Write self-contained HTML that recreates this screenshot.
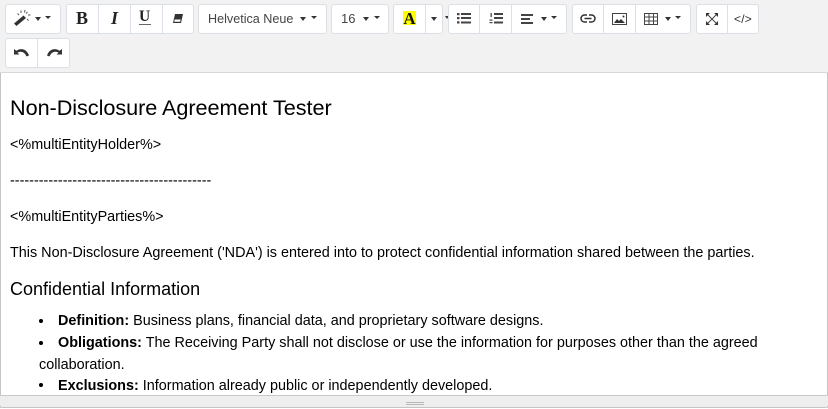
<!DOCTYPE html>
<html><head><meta charset="utf-8">
<style>
html,body{margin:0;padding:0;width:828px;height:409px;overflow:hidden;background:#fff;font-family:"Liberation Sans",sans-serif;color:#000}
.abs{position:absolute}
#tb{position:absolute;left:0;top:0;width:828px;height:72px;background:#f2f2f2;border-bottom:1px solid #d6d9dc}
.g{position:absolute;background:#fff;border:1px solid #dae0e5;border-radius:3px;box-sizing:border-box}
.d{position:absolute;top:0;bottom:0;width:1px;background:#dae0e5}
.t{position:absolute;white-space:nowrap;font-size:14.4px;line-height:18px;color:#000}
.tl{position:absolute;white-space:nowrap;font-size:12.6px;line-height:16px;color:#444}
svg{position:absolute;overflow:visible}
.car{position:absolute;width:0;height:0;border-left:3.500px solid transparent;border-right:3.500px solid transparent;border-top:4px solid #333}
.car2{position:absolute;width:0;height:0;border-left:3px solid transparent;border-right:3px solid transparent;border-top:3px solid #333}
</style></head><body>
<div id="tb">
<div class="g" style="left:5px;top:4px;width:56px;height:30px"></div>
<svg style="left:13px;top:9px" width="20" height="18" viewBox="0 0 20 18"><path d="M1 14.500L10.500 6.500l2.500 2.500-9.500 8z" fill="#333"/><path d="M8 1.500v2.500M12 1l-.5 2.500M15 6h2.500M14 10l1.500 1.500M4.500 4.500l1.500 1.500M14.500 3l-1.500 1.500" stroke="#555" stroke-width="1" fill="none"/></svg>
<div class="car" style="left:34.500px;top:17px"></div><div class="car2" style="left:45px;top:16px"></div>

<div class="g" style="left:66px;top:4px;width:128px;height:30px">
<div class="d" style="left:31px"></div><div class="d" style="left:63px"></div><div class="d" style="left:95px"></div></div>
<div class="abs" style="left:76px;top:8px;font:bold 18px/20px 'Liberation Serif',serif;color:#222">B</div>
<div class="abs" style="left:111px;top:8px;font:italic bold 18px/20px 'Liberation Serif',serif;color:#222">I</div>
<div class="abs" style="left:139px;top:7px;font:bold 15.500px/20px 'Liberation Serif',serif;color:#222">U</div>
<div class="abs" style="left:139px;top:24px;width:12px;height:1px;background:#666"></div>
<svg style="left:172px;top:13px" width="12" height="12" viewBox="0 0 12 12"><path d="M3 1h8L9 10H1z" fill="#333"/><path d="M2.700 6.500h6L8.200 8.800H2.200z" fill="#fff"/></svg>

<div class="g" style="left:198px;top:4px;width:129px;height:30px"></div>
<div class="tl" style="left:208px;top:11px">Helvetica Neue</div>
<div class="car" style="left:299.500px;top:17px"></div><div class="car2" style="left:311px;top:16px"></div>

<div class="g" style="left:331px;top:4px;width:58px;height:30px"></div>
<div class="tl" style="left:341px;top:11px;font-size:13px">16</div>
<div class="car" style="left:362.500px;top:17px"></div><div class="car2" style="left:374px;top:16px"></div>

<div class="g" style="left:393px;top:4px;width:50px;height:30px"><div class="d" style="left:31px"></div></div>
<div class="abs" style="left:403px;top:11px;width:13px;height:14px;background:#ff0;font:bold 17px/16px 'Liberation Serif',serif;text-align:center;color:#111;overflow:hidden">A</div>
<div class="car" style="left:430.500px;top:17px"></div>
<div class="car2" style="left:445px;top:16px;border-left-width:2px;border-right-width:2px"></div>

<div class="g" style="left:448px;top:4px;width:119px;height:30px">
<div class="d" style="left:30px"></div><div class="d" style="left:62px"></div></div>
<svg style="left:457px;top:12px" width="14" height="12" viewBox="0 0 14 12"><g fill="#444"><rect x="0" y="1" width="2.500" height="2.200"/><rect x="0" y="5" width="2.500" height="2.200"/><rect x="0" y="9.300" width="2.500" height="2.200"/><rect x="4" y="1" width="10" height="2"/><rect x="4" y="5" width="10" height="2"/><rect x="4" y="9.500" width="10" height="2"/></g></svg>
<svg style="left:489px;top:12px" width="14" height="12" viewBox="0 0 14 12"><g fill="#444"><rect x="5" y="1" width="9" height="2"/><rect x="5" y="5" width="9" height="2"/><rect x="5" y="9.500" width="9" height="2"/><rect x="1.500" y="1" width="1.300" height="4"/><rect x="0.500" y="7.500" width="3" height="1.200"/><rect x="0.500" y="10" width="3" height="1.200"/></g></svg>
<svg style="left:521px;top:13px" width="13" height="11" viewBox="0 0 13 11"><g fill="#444"><rect y="1" width="12" height="2"/><rect y="5" width="9" height="2"/><rect y="9" width="12" height="2"/></g></svg>
<div class="car" style="left:540.500px;top:17px"></div><div class="car2" style="left:551px;top:16px"></div>

<div class="g" style="left:572px;top:4px;width:119px;height:30px">
<div class="d" style="left:30px"></div><div class="d" style="left:62px"></div></div>
<svg style="left:581px;top:14px" width="14" height="9" viewBox="0 0 14 9"><path d="M6 1H3.500a3.500 3.500 0 0 0 0 7H6M8 1h2.500a3.500 3.500 0 0 1 0 7H8M3.500 4.500h7" fill="none" stroke="#333" stroke-width="1.500"/></svg>
<svg style="left:612px;top:13px" width="15" height="12" viewBox="0 0 15 12"><rect x=".5" y=".5" width="14" height="11" fill="none" stroke="#444"/><path d="M2 10l3-4 2 2 2-2 4 4z" fill="#333"/><circle cx="11.500" cy="3.500" r="1" fill="#333"/></svg>
<svg style="left:644px;top:13px" width="14" height="12" viewBox="0 0 14 12"><path d="M.5.500h13v11H.5zM.5 4h13M.5 8h13M5 .5v11M9.500.5v11" fill="none" stroke="#444"/></svg>
<div class="car" style="left:664.500px;top:17px"></div><div class="car2" style="left:675px;top:16px"></div>

<div class="g" style="left:696px;top:4px;width:63px;height:30px"><div class="d" style="left:30px"></div></div>
<svg style="left:706px;top:13px" width="12" height="12" viewBox="0 0 12 12"><path d="M2 2l8 8M10 2l-8 8" stroke="#444" stroke-width="1"/><path d="M0 0h4L0 4zM12 0H8l4 4zM0 12h4L0 8zM12 12H8l4-4z" fill="#333"/></svg>
<div class="abs" style="left:734px;top:11px;font-size:12px;line-height:16px;color:#333;letter-spacing:.2px">&lt;/&gt;</div>

<div class="g" style="left:5px;top:38px;width:65px;height:30px"><div class="d" style="left:31px"></div></div>
<svg style="left:14px;top:48px" width="15" height="9" viewBox="0 0 15 9"><path d="M0 1v5.500h5.500L3.500 4.700C6.500 2.800 10.500 3.500 12.500 8.500L15 7.500C12.800 1 7 -.5 2.300 2.800z" fill="#333"/></svg>
<svg style="left:47px;top:48px" width="15" height="9" viewBox="0 0 15 9"><path d="M15 1v5.500H9.500l2-1.800C8.500 2.800 4.500 3.500 2.500 8.500L0 7.500C2.200 1 8-.5 12.700 2.800z" fill="#333"/></svg>
</div>

<div class="abs" style="left:0;top:73px;width:1px;height:335px;background:#c4c4c4"></div>
<div class="abs" style="left:827px;top:73px;width:1px;height:335px;background:#c4c4c4"></div>

<div class="t" style="left:10px;top:95px;font-size:21.650px;line-height:26px;letter-spacing:-.05px">Non-Disclosure Agreement Tester</div>
<div class="t" style="left:10px;top:136px">&lt;%multiEntityHolder%&gt;</div>
<div class="t" style="left:10px;top:172px">------------------------------------------</div>
<div class="t" style="left:10px;top:208px">&lt;%multiEntityParties%&gt;</div>
<div class="t" style="left:10px;top:244px">This Non-Disclosure Agreement ('NDA') is entered into to protect confidential information shared between the parties.</div>
<div class="t" style="left:10px;top:278px;font-size:18px;line-height:22px">Confidential Information</div>

<div class="abs" style="left:39px;top:319px;width:4px;height:4px;border-radius:50%;background:#000"></div>
<div class="t" style="left:58px;top:312px"><b>Definition:</b> Business plans, financial data, and proprietary software designs.</div>
<div class="abs" style="left:39px;top:341px;width:4px;height:4px;border-radius:50%;background:#000"></div>
<div class="t" style="left:58px;top:334px"><b>Obligations:</b> The Receiving Party shall not disclose or use the information for purposes other than the agreed</div>
<div class="t" style="left:39px;top:356px">collaboration.</div>
<div class="abs" style="left:39px;top:383px;width:4px;height:4px;border-radius:50%;background:#000"></div>
<div class="t" style="left:58px;top:377px"><b>Exclusions:</b> Information already public or independently developed.</div>

<div class="abs" style="left:0;top:395px;width:828px;height:13px;background:#eee;border-top:1px solid #c8c8c8;border-bottom:1px solid #c4c4c4;box-sizing:border-box;border-radius:0 0 3px 3px"></div>
<div class="abs" style="left:406px;top:402px;width:18px;height:1px;background:#b8b8b8"></div>
<div class="abs" style="left:406px;top:404px;width:18px;height:1px;background:#b8b8b8"></div>
</body></html>
